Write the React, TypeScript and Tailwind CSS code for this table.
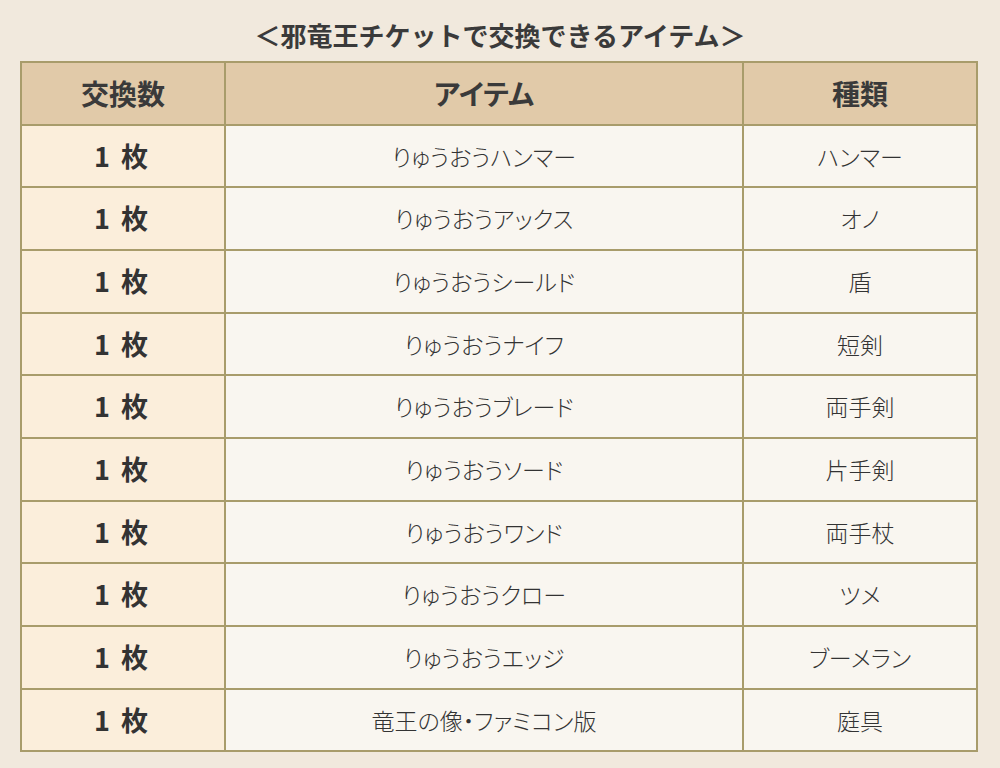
import React from "react";

const rows: [string, string][] = [
  ["りゅうおうハンマー", "ハンマー"],
  ["りゅうおうアックス", "オノ"],
  ["りゅうおうシールド", "盾"],
  ["りゅうおうナイフ", "短剣"],
  ["りゅうおうブレード", "両手剣"],
  ["りゅうおうソード", "片手剣"],
  ["りゅうおうワンド", "両手杖"],
  ["りゅうおうクロー", "ツメ"],
  ["りゅうおうエッジ", "ブーメラン"],
  ["竜王の像・ファミコン版", "庭具"],
];

const font = { fontFamily: '"Noto Sans CJK JP", "Noto Sans", sans-serif' };

export default function App() {
  return (
    <div className="min-h-[768px] w-[1000px] bg-[#f1e9dd] px-5 pt-[16px] text-[#333]" style={font}>
      <h2 className="mb-[7px] h-[38px] text-center text-[26px] font-bold leading-[38px] text-[#3a3a3a]">
        ＜邪竜王チケットで交換できるアイテム＞
      </h2>
      <table className="w-[956px] table-fixed border-collapse border-2 border-[#a89c6b] text-center">
        <colgroup>
          <col className="w-[204px]" />
          <col className="w-[518px]" />
          <col className="w-[234px]" />
        </colgroup>
        <thead>
          <tr className="h-[62.5px] bg-[#e1caa9] text-[28px] font-bold text-[#3a3a3a]">
            <th className="border-2 border-[#a89c6b] font-bold">交換数</th>
            <th className="border-2 border-[#a89c6b] font-bold [font-feature-settings:'palt']">アイテム</th>
            <th className="border-2 border-[#a89c6b] font-bold">種類</th>
          </tr>
        </thead>
        <tbody>
          {rows.map(([item, kind], i) => (
            <tr key={i} className="h-[62.7px]">
              <td className="border-2 border-[#a89c6b] bg-[#fbeedb] pr-[4px] text-[27px] font-bold [word-spacing:5px]">1 枚</td>
              <td className="border-2 border-[#a89c6b] bg-[#f9f6f0] text-[23px] font-light [font-feature-settings:'palt']">
                {item}
              </td>
              <td className="border-2 border-[#a89c6b] bg-[#f9f6f0] text-[23px] font-light [font-feature-settings:'palt']">
                {kind}
              </td>
            </tr>
          ))}
        </tbody>
      </table>
    </div>
  );
}
